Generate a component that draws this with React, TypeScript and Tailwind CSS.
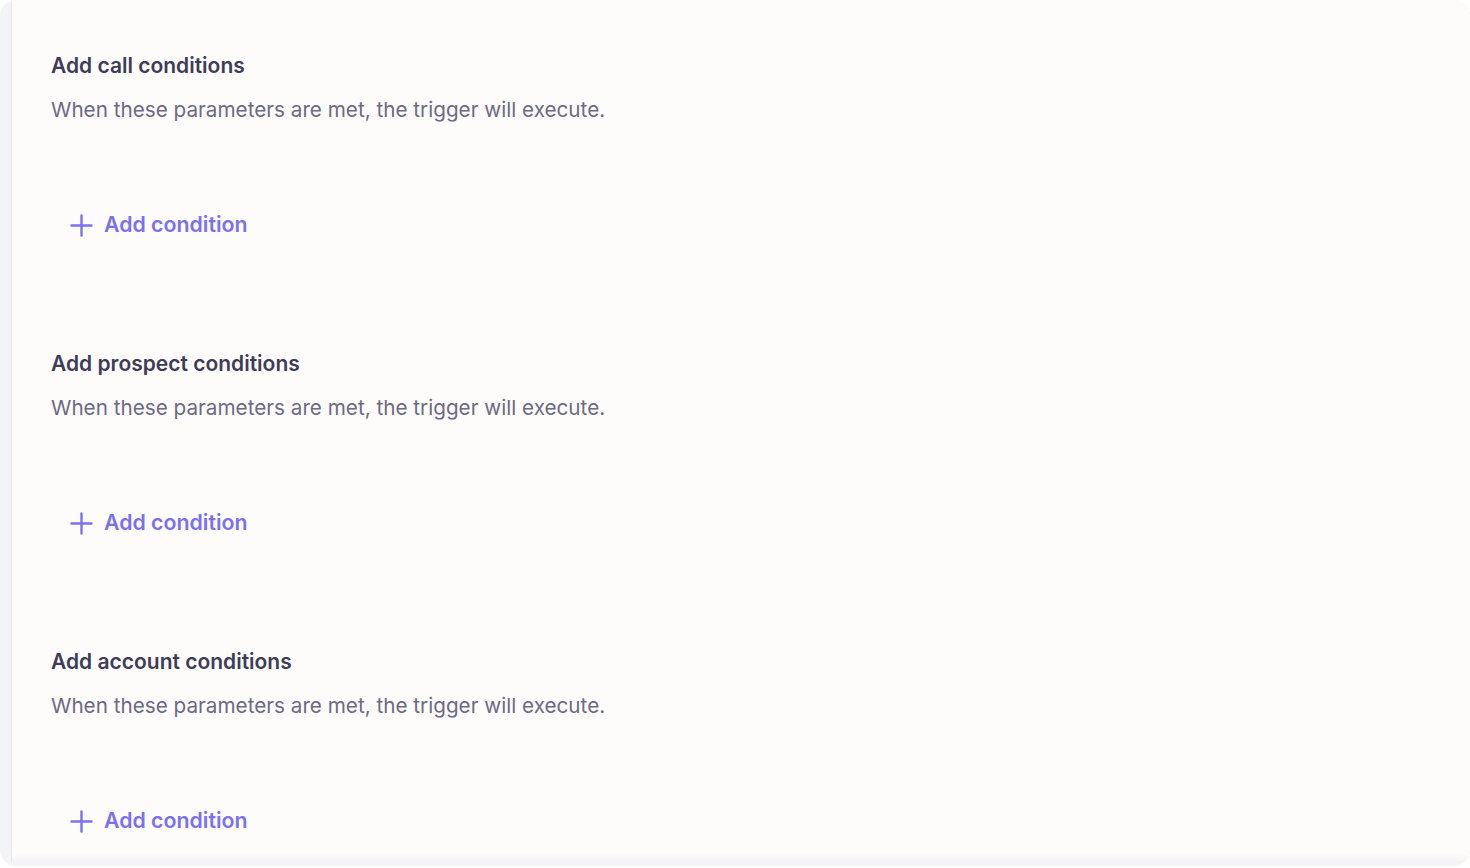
const sections = ['Add call conditions', 'Add prospect conditions', 'Add account conditions'];

function PlusIcon() {
  return (
    <svg width="23" height="23" viewBox="0 0 23 23" fill="none" stroke="currentColor" strokeWidth="2.4" strokeLinecap="round">
      <path d="M11.5 1.5v20M1.5 11.5h20" />
    </svg>
  );
}

function ConditionSection({ title }: { title: string }) {
  return (
    <section className="mb-[105px]">
      <h2 className="text-[21px] leading-[28px] font-semibold text-[#3e3c57]">{title}</h2>
      <p className="mt-[16px] text-[20.7px] leading-[28px] text-[#6d6a83]">
        When these parameters are met, the trigger will execute.
      </p>
      <button
        type="button"
        className="mt-[81px] flex h-10 items-center gap-[11px] pl-[19px] text-[21.3px] font-semibold text-[#7a70f2]"
      >
        <PlusIcon />
        Add condition
      </button>
    </section>
  );
}

export default function App() {
  return (
    <div className="h-[868px] w-full bg-white" style={{ fontFamily: 'Inter, "Noto Sans", sans-serif' }}>
      <div className="flex h-[866px] overflow-hidden rounded-2xl bg-[#f4f4f7]">
        <div className="w-[11px] shrink-0" />
        <main className="relative mb-[4px] flex-1 overflow-hidden rounded-tr-2xl border-l border-[#e6e6ec] bg-[#fdfcfb] pl-[39px] pt-[52px]">
          {sections.map((s) => (
            <ConditionSection key={s} title={s} />
          ))}
          <div className="pointer-events-none absolute bottom-0 left-0 right-0 h-[8px] bg-gradient-to-b from-transparent to-[#f4f4f5]" />
        </main>
      </div>
    </div>
  );
}
